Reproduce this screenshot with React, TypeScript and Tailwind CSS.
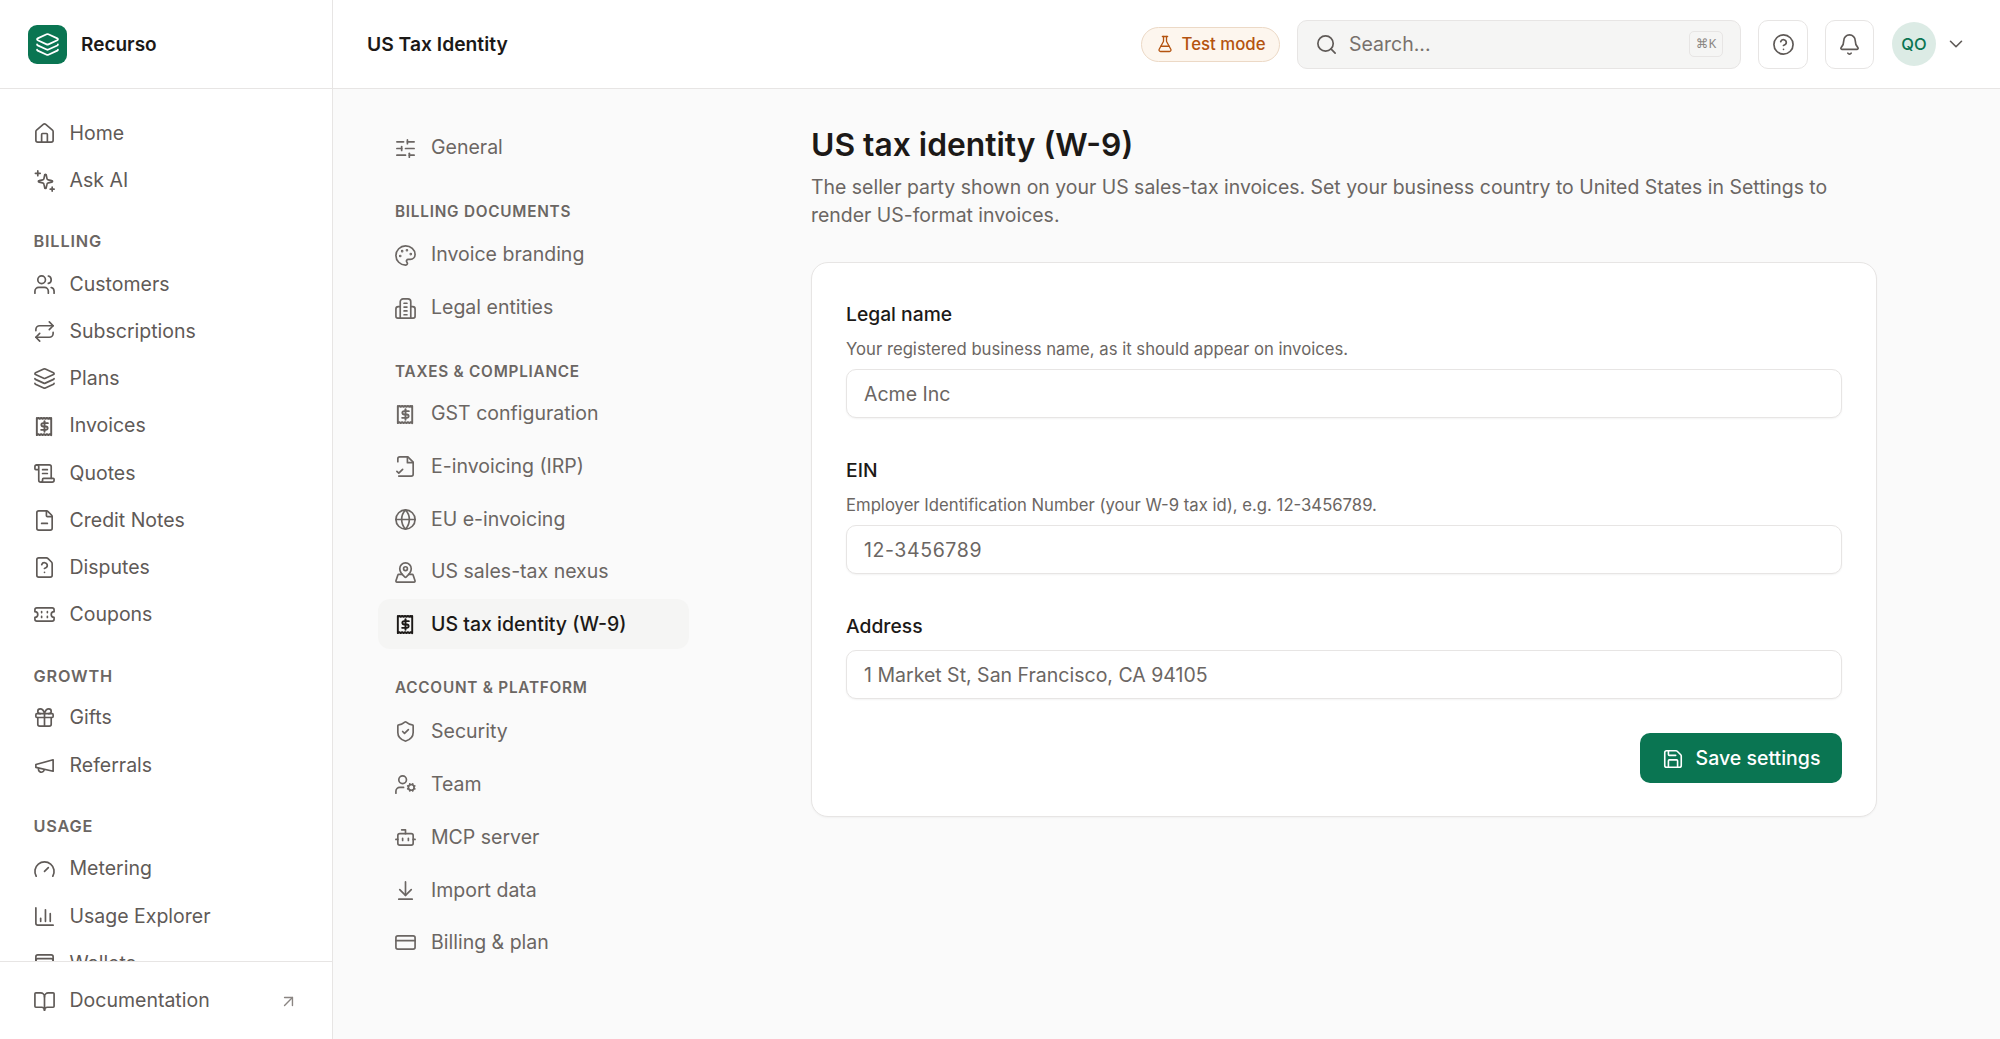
import type { ComponentType, ReactNode } from 'react';
import {
  House,
  Users,
  Repeat,
  Layers,
  ScrollText,
  FileMinus,
  FileQuestion,
  Gift,
  Gauge,
  ChartColumn,
  WalletCards,
  BookOpen,
  ArrowUpRight,
  SlidersHorizontal,
  Palette,
  Globe,
  MapPinned,
  ShieldCheck,
  UserCog,
  Bot,
  ArrowDownToLine,
  CreditCard,
  FlaskConical,
  Search,
  CircleHelp,
  Bell,
  ChevronDown,
  Save,
} from 'lucide-react';

type IconType = ComponentType<{ className?: string; strokeWidth?: number }>;
type DrawnProps = { className?: string; strokeWidth?: number };

function Drawn({ className, strokeWidth = 1.75, children }: DrawnProps & { children: ReactNode }) {
  return (
    <svg viewBox="0 0 24 24" fill="none" stroke="currentColor" strokeWidth={strokeWidth} strokeLinecap="round" strokeLinejoin="round" className={className}>
      {children}
    </svg>
  );
}

function ReceiptDollar(props: DrawnProps) {
  return (
    <Drawn {...props} strokeWidth={2}>
      <path d="M4 3v18l1.500-1 1.500 1 1.500-1 1.500 1 1.500-1 1.500 1 1.500-1 1.500 1 1.500-1 1.500 1V3l-1.500 1L17.500 3 16 4l-1.500-1L13 4l-1.500-1L10 4 8.500 3 7 4 5.500 3 4 4z" />
      <path d="M15.500 8.500h-5a1.750 1.750 0 0 0 0 3.500h3a1.750 1.750 0 0 1 0 3.500h-5" />
      <path d="M12 6.500v11" />
    </Drawn>
  );
}

function Entities(props: DrawnProps) {
  return (
    <Drawn {...props}>
      <path d="M6.500 22V5a3 3 0 0 1 3-3h5a3 3 0 0 1 3 3v17" />
      <path d="M6.500 10H4.500a2.500 2.500 0 0 0-2.500 2.500V20a2 2 0 0 0 2 2h16a2 2 0 0 0 2-2v-7.500a2.500 2.500 0 0 0-2.500-2.500h-2" />
      <path d="M10.500 6.500h3M10.500 10.500h3M10.500 14.500h3M10.500 18.500h3" />
    </Drawn>
  );
}

function AskAi(props: DrawnProps) {
  return (
    <Drawn {...props}>
      <path d="M12.200 6.300a.8.8 0 0 1 1.600 0l.8 3.700a1.600 1.600 0 0 0 1.300 1.300l3.700.8a.8.8 0 0 1 0 1.600l-3.700.8a1.600 1.600 0 0 0-1.300 1.300l-.8 3.700a.8.8 0 0 1-1.600 0l-.8-3.700a1.600 1.600 0 0 0-1.300-1.300l-3.700-.8a.8.8 0 0 1 0-1.600l3.700-.8a1.600 1.600 0 0 0 1.300-1.300z" />
      <path d="M5 2v5M2.500 4.500h5" />
      <path d="M20 19v4M18 21h4" />
    </Drawn>
  );
}

function Coupon(props: DrawnProps) {
  return (
    <Drawn {...props}>
      <path d="M2 9a3 3 0 0 1 0 6v2a2 2 0 0 0 2 2h16a2 2 0 0 0 2-2v-2a3 3 0 0 1 0-6V7a2 2 0 0 0-2-2H4a2 2 0 0 0-2 2Z" />
      <path d="M9 9v1M9 14v1M15 9v1M15 14v1" />
    </Drawn>
  );
}

function Horn(props: DrawnProps) {
  return (
    <Drawn {...props}>
      <path d="m3 11 18-5v12L3 14z" />
      <path d="M11.600 16.800a3 3 0 1 1-5.800-1.600" />
    </Drawn>
  );
}

function FileTick(props: DrawnProps) {
  return (
    <Drawn {...props}>
      <path d="M4 7V4a2 2 0 0 1 2-2h8.500L20 7.500V20a2 2 0 0 1-2 2H5" />
      <path d="M14 2v6h6" />
      <path d="m3 17 2 2 4-4" />
    </Drawn>
  );
}

function SectionLabel({ children, className }: { children: ReactNode; className: string }) {
  return (
    <div className={`h-6 flex items-center font-semibold tracking-[0.05em] text-[#6b6663] ${className}`}>
      {children}
    </div>
  );
}

function SideItem({ icon: Icon, label }: { icon: IconType; label: string }) {
  return (
    <div className="h-[47.2px] flex items-center gap-[13.500px] pl-[33px] text-[19.500px] text-[#5f5a57] shrink-0">
      <Icon className="w-[23px] h-[23px] shrink-0" strokeWidth={1.75} />
      <span>{label}</span>
    </div>
  );
}

function SettingsItem({ icon: Icon, label, active }: { icon: IconType; label: string; active?: boolean }) {
  return (
    <div
      className={`h-[50px] pt-[2px] flex items-center gap-[14px] pl-[16px] rounded-[12px] text-[19.500px] ${
        active ? 'bg-[#f5f5f4] text-[#1c1917] font-medium' : 'text-[#6b6663]'
      }`}
    >
      <Icon className="w-[23px] h-[23px] shrink-0" strokeWidth={1.75} />
      <span>{label}</span>
    </div>
  );
}

function Field({ label, help, value, mono }: { label: string; help?: string; value: string; mono?: boolean }) {
  return (
    <div>
      <div className="h-7 flex items-center text-[19.300px] font-medium text-[#1c1917]">{label}</div>
      {help && <div className="h-6 mt-[10px] flex items-center text-[16.700px] text-[#6b6663]">{help}</div>}
      <div
        className={`h-[49px] flex items-center px-[17px] pt-[2px] bg-white border border-[#e7e5e4] rounded-[10px] shadow-[0_1px_2px_rgba(0,0,0,0.05)] text-[19.500px] text-[#6b6663] ${
          mono ? 'tracking-[0.6px]' : ''
        } ${help ? 'mt-[7px]' : 'mt-[10px]'}`}
      >
        {value}
      </div>
    </div>
  );
}

export default function App() {
  return (
    <div className="w-[2000px] h-[1039px] flex overflow-hidden bg-[#fafafa] font-['Inter',sans-serif]">
      <aside className="w-[333px] shrink-0 h-full flex flex-col bg-white border-r border-[#e7e5e4]">
        <div className="h-[89px] shrink-0 flex items-center gap-[14px] pl-[28px] border-b border-[#e7e5e4]">
          <div className="w-[39px] h-[39px] rounded-[9px] bg-[#0a7552] flex items-center justify-center">
            <Layers className="w-[25px] h-[25px] text-white" strokeWidth={1.75} />
          </div>
          <span className="pt-[2px] text-[19px] font-semibold text-[#1c1917]">Recurso</span>
        </div>

        <nav className="flex-1 min-h-0 overflow-hidden pt-[21px] flex flex-col">
          <SideItem icon={House} label="Home" />
          <SideItem icon={AskAi} label="Ask AI" />

          <SectionLabel className="mt-[25px] mb-[7.500px] ml-[33.500px] text-[16.300px]">BILLING</SectionLabel>
          <SideItem icon={Users} label="Customers" />
          <SideItem icon={Repeat} label="Subscriptions" />
          <SideItem icon={Layers} label="Plans" />
          <SideItem icon={ReceiptDollar} label="Invoices" />
          <SideItem icon={ScrollText} label="Quotes" />
          <SideItem icon={FileMinus} label="Credit Notes" />
          <SideItem icon={FileQuestion} label="Disputes" />
          <SideItem icon={Coupon} label="Coupons" />

          <SectionLabel className="mt-[25.500px] mb-[6.500px] ml-[33.500px] text-[16.300px]">GROWTH</SectionLabel>
          <SideItem icon={Gift} label="Gifts" />
          <SideItem icon={Horn} label="Referrals" />

          <SectionLabel className="mt-[25.700px] mb-[7px] ml-[33.500px] text-[16.300px]">USAGE</SectionLabel>
          <SideItem icon={Gauge} label="Metering" />
          <SideItem icon={ChartColumn} label="Usage Explorer" />
          <SideItem icon={WalletCards} label="Wallets" />
        </nav>

        <div className="h-[78px] pt-[1px] shrink-0 border-t border-[#e7e5e4] flex items-center gap-[13.500px] pl-[33px] pr-[34px] text-[19.500px] text-[#5f5a57]">
          <BookOpen className="w-[23px] h-[23px] shrink-0" strokeWidth={1.75} />
          <span className="flex-1">Documentation</span>
          <ArrowUpRight className="w-[19px] h-[19px] text-[#8a8582]" strokeWidth={1.75} />
        </div>
      </aside>

      <div className="flex-1 min-w-0 flex flex-col">
        <header className="h-[89px] shrink-0 flex items-center bg-white border-b border-[#e7e5e4] pl-[34px] pr-[33px]">
          <div className="flex-1 pt-[1px] text-[19.300px] font-semibold text-[#1c1917]">US Tax Identity</div>
          <div className="h-[35px] w-[139px] flex items-center justify-center gap-[8px] rounded-full bg-[#fdf6ee] border border-[#ecd9c6] text-[16.800px] font-medium text-[#b4530f]">
            <FlaskConical className="w-[18px] h-[18px]" strokeWidth={1.75} />
            <span className="pt-[2px]">Test mode</span>
          </div>
          <div className="ml-[17px] w-[444px] h-[49px] flex items-center gap-[11px] pl-[17px] pr-[17px] rounded-[10px] bg-[#f5f5f4] border border-[#e7e5e4]">
            <Search className="w-[23px] h-[23px] text-[#5f5a57]" strokeWidth={1.75} />
            <span className="flex-1 pt-[2px] text-[19.500px] text-[#78716c]">Search...</span>
            <span className="h-[26px] w-[34px] flex items-center justify-center rounded-[5px] bg-[#f5f5f4] border border-[#e7e5e4] text-[12.500px] text-[#8a8582] font-['Noto_Sans','DejaVu_Sans',sans-serif]">
              ⌘K
            </span>
          </div>
          <div className="ml-[17px] w-[50px] h-[49px] flex items-center justify-center rounded-[10px] bg-white border border-[#e7e5e4]">
            <CircleHelp className="w-[23px] h-[23px] text-[#5f5a57]" strokeWidth={1.75} />
          </div>
          <div className="ml-[17px] w-[49px] h-[49px] flex items-center justify-center rounded-[10px] bg-white border border-[#e7e5e4]">
            <Bell className="w-[23px] h-[23px] text-[#5f5a57]" strokeWidth={1.75} />
          </div>
          <div className="ml-[18px] w-[44px] h-[44px] pt-[1px] flex items-center justify-center rounded-full bg-[#dcebe5] text-[16.500px] font-medium text-[#0a7552]">
            QO
          </div>
          <ChevronDown className="ml-[9px] w-[22px] h-[22px] text-[#5f5a57]" strokeWidth={1.75} />
        </header>

        <div className="flex-1 min-h-0 flex overflow-hidden">
          <div className="w-[478px] shrink-0 pl-[45px] pr-[122px] pt-[33px]">
            <div className="w-[311px]">
              <SettingsItem icon={SlidersHorizontal} label="General" />

              <SectionLabel className="mt-[28px] mb-[5px] ml-[17px] text-[15.300px]">BILLING DOCUMENTS</SectionLabel>
              <div className="flex flex-col gap-[3px]">
                <SettingsItem icon={Palette} label="Invoice branding" />
                <SettingsItem icon={Entities} label="Legal entities" />
              </div>

              <SectionLabel className="mt-[28px] mb-[4px] ml-[17px] text-[15.300px]">TAXES &amp; COMPLIANCE</SectionLabel>
              <div className="flex flex-col gap-[2.700px]">
                <SettingsItem icon={ReceiptDollar} label="GST configuration" />
                <SettingsItem icon={FileTick} label="E-invoicing (IRP)" />
                <SettingsItem icon={Globe} label="EU e-invoicing" />
                <SettingsItem icon={MapPinned} label="US sales-tax nexus" />
                <SettingsItem icon={ReceiptDollar} label="US tax identity (W-9)" active />
              </div>

              <SectionLabel className="mt-[28px] mb-[5px] ml-[17px] text-[15.300px]">ACCOUNT &amp; PLATFORM</SectionLabel>
              <div className="flex flex-col gap-[2.800px]">
                <SettingsItem icon={ShieldCheck} label="Security" />
                <SettingsItem icon={UserCog} label="Team" />
                <SettingsItem icon={Bot} label="MCP server" />
                <SettingsItem icon={ArrowDownToLine} label="Import data" />
                <SettingsItem icon={CreditCard} label="Billing & plan" />
              </div>
            </div>
          </div>

          <main className="w-[1066px] shrink-0 pt-[34px]">
            <h1 className="text-[31.800px] leading-[44px] font-semibold text-[#1c1917]">US tax identity (W-9)</h1>
            <p className="mt-[6px] text-[19.450px] leading-[28px] text-[#6b6663]">
              The seller party shown on your US sales-tax invoices. Set your business country to United States in Settings to render US-format invoices.
            </p>
            <div className="mt-[33px] bg-white border border-[#e7e5e4] rounded-[17px] px-[34px] pt-[37px] pb-[33px] shadow-[0_1px_2px_rgba(0,0,0,0.04)]">
              <div className="flex flex-col">
                <Field label="Legal name" help="Your registered business name, as it should appear on invoices." value="Acme Inc" />
                <div className="mt-[38px]">
                  <Field label="EIN" help="Employer Identification Number (your W-9 tax id), e.g. 12-3456789." value="12-3456789" mono />
                </div>
                <div className="mt-[38px]">
                  <Field label="Address" value="1 Market St, San Francisco, CA 94105" />
                </div>
              </div>
              <div className="mt-[34px] flex justify-end">
                <button className="h-[50px] w-[202px] pt-[1px] flex items-center justify-center gap-[12px] rounded-[10px] bg-[#0a7552] text-white text-[19.500px] font-medium">
                  <Save className="w-[22px] h-[22px]" strokeWidth={1.75} />
                  Save settings
                </button>
              </div>
            </div>
          </main>
        </div>
      </div>
    </div>
  );
}
